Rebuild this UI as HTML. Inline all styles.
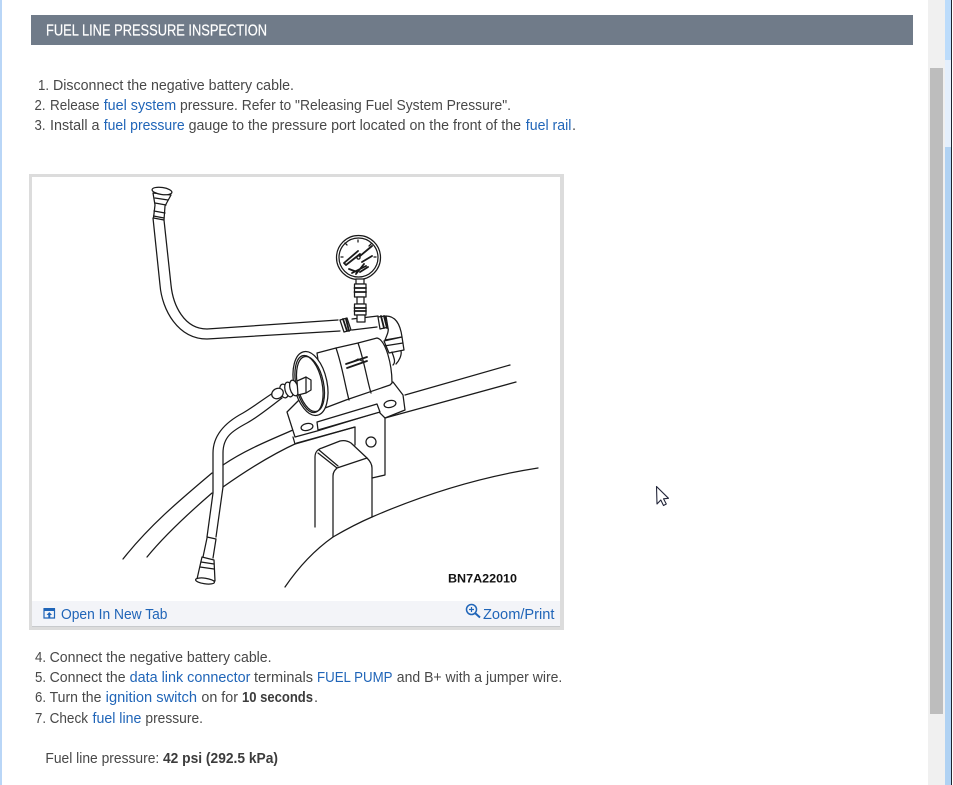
<!DOCTYPE html>
<html><head><meta charset="utf-8"><title>Fuel Line Pressure Inspection</title>
<style>
html,body{margin:0;padding:0;background:#fff;width:953px;height:785px;overflow:hidden}
svg{display:block;position:absolute;left:0;top:0}
text{font-family:"Liberation Sans",sans-serif;font-size:14.6px;fill:#484848}
.a{fill:#2065b8}
.b{font-weight:bold;fill:#3c3c3c;font-size:14.800px}
.d{fill:none;stroke:#1a1a1a;stroke-width:1.250;stroke-linejoin:round;stroke-linecap:round}
.w{fill:#fff;stroke:#1a1a1a;stroke-width:1.250;stroke-linejoin:round}
.h{fill:none;stroke:#1a1a1a;stroke-width:1.800;stroke-linecap:round;stroke-linejoin:round}
</style></head><body>
<svg width="953" height="785" viewBox="0 0 953 785" xmlns="http://www.w3.org/2000/svg">
<rect width="953" height="785" fill="#fff"/>
<!-- window edges -->
<rect x="0" y="0" width="2" height="785" fill="#b9d6f7"/>
<rect x="928" y="0" width="17" height="785" fill="#f0f0f0"/>
<rect x="930" y="68" width="13" height="646" fill="#bdbdbd"/>
<rect x="945" y="0" width="6" height="60" fill="#bcdcfb"/>
<rect x="945" y="60" width="6" height="87" fill="#e4effc"/>
<rect x="945" y="147" width="6" height="638" fill="#b0d2f3"/>
<rect x="951" y="0" width="1" height="785" fill="#20242e"/>
<!-- header -->
<rect x="31" y="15" width="882" height="30" fill="#707b89"/>
<text x="46" y="35.500" textLength="221" lengthAdjust="spacingAndGlyphs" style="fill:#fff;font-size:15.500px;stroke:#fff;stroke-width:.2">FUEL LINE PRESSURE INSPECTION</text>
<!-- steps 1-3 -->
<text x="38" y="90" textLength="11" lengthAdjust="spacingAndGlyphs">1.</text>
<text x="53" y="90" textLength="241" lengthAdjust="spacingAndGlyphs">Disconnect the negative battery cable.</text>
<text x="34.500" y="110" textLength="11" lengthAdjust="spacingAndGlyphs">2.</text>
<text x="50" y="110" textLength="49.500" lengthAdjust="spacingAndGlyphs">Release</text>
<text class="a" x="103.700" y="110" textLength="72.500" lengthAdjust="spacingAndGlyphs">fuel system</text>
<text x="180" y="110" textLength="331" lengthAdjust="spacingAndGlyphs">pressure. Refer to "Releasing Fuel System Pressure".</text>
<text x="34.500" y="130" textLength="11" lengthAdjust="spacingAndGlyphs">3.</text>
<text x="50" y="130" textLength="49.500" lengthAdjust="spacingAndGlyphs">Install a</text>
<text class="a" x="103.700" y="130" textLength="81" lengthAdjust="spacingAndGlyphs">fuel pressure</text>
<text x="188.600" y="130" textLength="332.500" lengthAdjust="spacingAndGlyphs">gauge to the pressure port located on the front of the</text>
<text class="a" x="525.800" y="130" textLength="45.600" lengthAdjust="spacingAndGlyphs">fuel rail</text>
<text x="572" y="130">.</text>
<!-- figure frame -->
<rect x="29" y="174" width="535" height="456" fill="#dcdcdc"/>
<rect x="32" y="177" width="528" height="450" fill="#fff"/>
<rect x="32" y="601" width="528" height="26" fill="#f3f4f8"/>
<rect x="32" y="626" width="528" height="1" fill="#c8cacd"/>
<!-- drawing: upper hose -->
<path class="d" d="M153 218 L160 285 C162 310 178 339 207 339 L340 331"/>
<path class="d" d="M164 220 L171 285 C173 305 184 329 207 329 L338 320"/>
<path class="w" d="M153 193 L155 205 L153.500 218 L164 220 L165 206 L171 195Z"/>
<path class="d" d="M155 198 L168 200 M155 203 L166 205 M154 211 L165 213 M153.500 216 L164 218"/>
<ellipse class="w" cx="162" cy="191" rx="10" ry="3.500" transform="rotate(8 162 191)"/>
<!-- pipe to elbow -->
<path class="d" d="M352 319 L378 316 M352 330 L377 327"/>
<path class="w" d="M340 320 L347 318 L351 330 L344 332Z"/>
<path class="h" d="M343 319 L347 331 M346 319 L349 331"/>
<path class="w" d="M378 317 L385 316 L389 327 L380 329Z"/>
<path class="h" d="M381 316 L384 328 M384 316 L387 328"/>
<path class="w" d="M386 316 C394 316 400 322 402 337 L385 340 C387 335 389 331 388 328Z"/>
<path class="w" d="M384 341 L402 337 L404 350 L389 353Z"/>
<path class="d" d="M384 346 L403 343 M392 352 C394 358 396 362 393 365 M401 351 C402 355 399 361 396 364"/>
<!-- gauge + stem -->
<circle class="w" cx="358.500" cy="257.500" r="22"/>
<circle class="d" cx="358.500" cy="257.500" r="19.500"/>
<path class="h" d="M344 263 L358 251 M346 265 L360 254 M344 263 L346 265"/>
<path class="h" d="M360 256 L372 246 M362 262 L372 256 M352 273 L366 266 M349 269 L357 272 M356 274 L364 264 M360 272 L368 267"/>
<circle class="d" cx="358.500" cy="257.500" r="1.600"/>
<path class="d" d="M345 243 L347 245 M358 240 L358 242 M371 244 L369 246 M376 257 L374 257 M341 257 L343 257"/>
<path class="w" d="M356 279 L364 279 L364 284 L356 284Z"/>
<path class="w" d="M354.500 284 L366 284 L366 297 L354.500 297Z"/>
<path class="h" d="M354.500 288 L366 288 M354.500 292 L366 292"/>
<path class="w" d="M357 297 L364 297 L364 304 L357 304Z"/>
<path class="w" d="M354.500 304 L366 304 L366 315 L354.500 315Z"/>
<path class="h" d="M354.500 308 L366 308 M354.500 311 L366 311"/>
<path class="w" d="M357 315 L365 315 L365 322 L357 322Z"/>
<!-- car body curves -->
<path class="d" d="M123 559 C150 525 180 500 212 473"/>
<path class="d" d="M223 465 C245 450 270 440 293 430"/>
<path class="d" d="M147 557 C165 535 190 512 212 493"/>
<path class="d" d="M223 487 C250 468 275 453 297 443 L355 427"/>
<path class="d" d="M405 395 L510 365"/>
<path class="d" d="M385 418 L516 382"/>
<!-- bracket -->
<path class="w" d="M303 396 L287 412 L295 437 L317 431 L379 412 L385 418 L405 410 L403 395 L393 382Z"/>
<path class="w" d="M317 422 L377 404 L380 412 L318 430Z"/>
<ellipse class="w" cx="307" cy="427" rx="6" ry="3.500" transform="rotate(-12 307 427)"/>
<ellipse class="w" cx="390" cy="404" rx="6" ry="3.500" transform="rotate(-12 390 404)"/>
<path class="d" d="M293 437 L295 444 L355 427 L355 445 M385 418 L385 475 L372 478"/>
<circle class="d" cx="371" cy="442" r="5"/>
<!-- filter body -->
<path class="w" d="M317 353 L336 348 L358 343 L377 338 C386 340 392 365 392 383 L390 385 L346 400 L325 408Z"/>
<path class="d" d="M336 348 C342 365 345 385 349 400 M358 343 C364 360 367 380 371 393"/>
<path class="h" d="M346 364 L367 357 M347 368 L367 361"/>
<path class="d" d="M352 362 L358 359 L362 361"/>
<ellipse class="w" cx="310.500" cy="383.500" rx="16.500" ry="32.500" transform="rotate(-12 310.500 383.500)"/>
<ellipse class="d" cx="309" cy="384" rx="13" ry="29" transform="rotate(-12 309 384)"/>
<ellipse class="d" cx="310.500" cy="384" rx="13" ry="28" transform="rotate(-12 310.500 384)"/>
<!-- nozzle -->
<ellipse class="w" cx="284" cy="391" rx="4" ry="7" transform="rotate(-15 284 391)"/>
<ellipse class="w" cx="289" cy="389.500" rx="4" ry="7.500" transform="rotate(-15 289 389.500)"/>
<ellipse class="w" cx="294" cy="388" rx="4" ry="8" transform="rotate(-15 294 388)"/>
<path class="w" d="M297 381 L306 377 L311 380 L311 390 L306 393 L298 395Z"/>
<path class="d" d="M306 377 L306 393"/>
<!-- lower hose -->
<path class="d" d="M273 393 C262 400 252 408 243 413 C226 422 213 435 213 453 L213 493 L207 537"/>
<path class="d" d="M282 398 C270 407 258 417 247 423 C232 431 223 437 223 453 L223 487 L216 537"/>
<ellipse class="w" cx="277.500" cy="393.500" rx="6" ry="5" transform="rotate(-30 277.500 393.500)"/>
<path class="d" d="M207 537 L216 539 M207 538 L203 557 M216 539 L213 558"/>
<path class="w" d="M202 557 L214 560 L215 581 L197 579Z"/>
<path class="d" d="M201 562 L214 564 M200 567 L214 569"/>
<ellipse class="w" cx="205" cy="581" rx="9.500" ry="2.800" transform="rotate(8 205 581)"/>
<!-- box -->
<path class="d" d="M315 527 L315 457 C315 452 318 449 322 448 L340 441 C344 440 348 441 351 443 L367 458 C370 461 372 464 372 468 L372 517" stroke="#444"/>
<path class="d" d="M318 453 L337 468 L367 458 M337 468 C335 470 333 472 333 476 L333 537"/>
<path class="d" d="M319 450 L338 466"/>
<path class="d" d="M285 587 C300 565 316 549 333 537 C345 530 358 523 372 517 C425 494 480 477 538 468"/>
<text x="448" y="582.500" textLength="69" lengthAdjust="spacingAndGlyphs" style="font-size:12px;font-weight:bold;fill:#111">BN7A22010</text>
<!-- footer: open-in-new-tab icon -->
<path d="M44 609 H54.500 V618 H44Z" fill="none" stroke="#2065b8" stroke-width="1.200"/>
<path d="M43.500 608 H55 V611 H43.500Z" fill="#2065b8"/>
<path d="M49.300 612 L52 615 H50.300 V618 H48.300 V615 H46.600Z" fill="#2065b8"/>
<text class="a" x="61" y="619" textLength="106.500" lengthAdjust="spacingAndGlyphs">Open In New Tab</text>
<!-- zoom icon -->
<circle cx="471.500" cy="609.500" r="5" fill="none" stroke="#2065b8" stroke-width="1.500"/>
<path d="M475 613 L480 617.500" stroke="#2065b8" stroke-width="2" fill="none"/>
<path d="M469 609.500 H474 M471.500 607 V612" stroke="#2065b8" stroke-width="1.200" fill="none"/>
<text class="a" x="483" y="619" textLength="71.500" lengthAdjust="spacingAndGlyphs">Zoom/Print</text>
<!-- steps 4-7 -->
<text x="35" y="662" textLength="11" lengthAdjust="spacingAndGlyphs">4.</text>
<text x="49.600" y="662" textLength="222" lengthAdjust="spacingAndGlyphs">Connect the negative battery cable.</text>
<text x="35" y="682" textLength="11" lengthAdjust="spacingAndGlyphs">5.</text>
<text x="49.600" y="682" textLength="76" lengthAdjust="spacingAndGlyphs">Connect the</text>
<text class="a" x="129.600" y="682" textLength="120.800" lengthAdjust="spacingAndGlyphs">data link connector</text>
<text x="254" y="682" textLength="59" lengthAdjust="spacingAndGlyphs">terminals</text>
<text class="a" x="317" y="682" textLength="75.500" lengthAdjust="spacingAndGlyphs">FUEL PUMP</text>
<text x="396.800" y="682" textLength="165.500" lengthAdjust="spacingAndGlyphs">and B+ with a jumper wire.</text>
<text x="35" y="702" textLength="11" lengthAdjust="spacingAndGlyphs">6.</text>
<text x="49.600" y="702" textLength="51.800" lengthAdjust="spacingAndGlyphs">Turn the</text>
<text class="a" x="105.700" y="702" textLength="91.300" lengthAdjust="spacingAndGlyphs">ignition switch</text>
<text x="201.400" y="702" textLength="36.600" lengthAdjust="spacingAndGlyphs">on for</text>
<text class="b" x="242" y="702" textLength="71" lengthAdjust="spacingAndGlyphs">10 seconds</text>
<text x="314" y="702">.</text>
<text x="35" y="723" textLength="11" lengthAdjust="spacingAndGlyphs">7.</text>
<text x="49.600" y="723" textLength="38.400" lengthAdjust="spacingAndGlyphs">Check</text>
<text class="a" x="92.500" y="723" textLength="48.900" lengthAdjust="spacingAndGlyphs">fuel line</text>
<text x="145.400" y="723" textLength="57.600" lengthAdjust="spacingAndGlyphs">pressure.</text>
<text x="45.400" y="763" textLength="113.900" lengthAdjust="spacingAndGlyphs">Fuel line pressure:</text>
<text class="b" x="163" y="763" textLength="115" lengthAdjust="spacingAndGlyphs">42 psi (292.5 kPa)</text>
<!-- cursor -->
<path d="M656.500 486.500 L657 504 L660.800 500 L663.500 505.500 L666.300 504 L663.500 498.800 L668.500 498.300Z" fill="#fff" stroke="#23263a" stroke-width="1.100" stroke-linejoin="round"/>
</svg>
</body></html>
